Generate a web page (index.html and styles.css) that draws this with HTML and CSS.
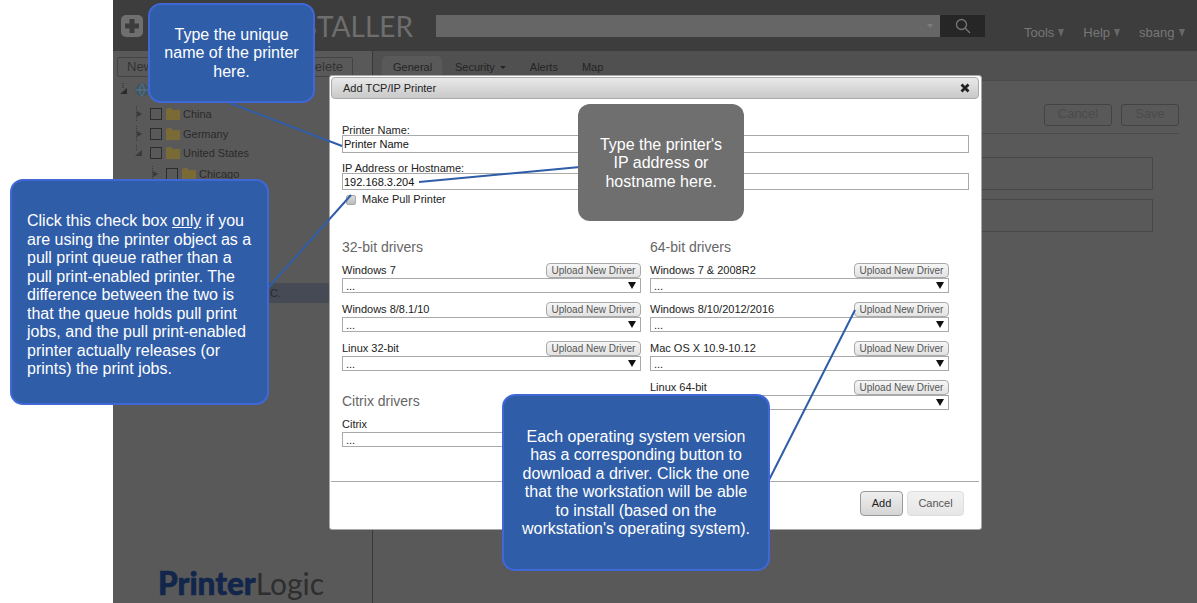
FILE: index.html
```html
<!DOCTYPE html>
<html lang="en">
<head>
<meta charset="utf-8">
<title>Add TCP/IP Printer</title>
<link rel="stylesheet" href="styles.css">
</head>
<body>
<div class="page">
  <div class="app">
    <header class="topbar">
      <div class="brand">
        <svg class="brand-plus" width="22" height="22" viewBox="0 0 22 22"><rect width="22" height="22" rx="5" fill="#6f6f6f"/><path d="M8.5 4h5v4.500h4.500v5h-4.500v4.500h-5v-4.500h-4.500v-5h4.500z" fill="#3d3d3d"/></svg>
        <span class="brand-name">PRINTER INSTALLER</span>
      </div>
      <div class="search">
        <div class="search-field"><span class="search-caret"></span></div>
        <div class="search-btn">
          <svg width="16" height="16" viewBox="0 0 16 16" fill="none" stroke="#777" stroke-width="1.300"><circle cx="6.500" cy="6.500" r="5"/><path d="M10 10l5 5"/></svg>
        </div>
      </div>
      <nav class="topnav">
        <span class="nav-item">Tools<i></i></span>
        <span class="nav-item">Help<i></i></span>
        <span class="nav-item">sbang<i></i></span>
      </nav>
    </header>
    <div class="main">
      <aside class="side">
        <div class="toolbar"><span>New</span><span>Delete</span></div>
        <div class="tree-row root">
          <svg class="exp" width="12" height="14" viewBox="0 0 12 14"><path d="M6 0v5" stroke="#2b2b2b" stroke-dasharray="1 1"/><path d="M10 5v6H3z" fill="#2b2b2b"/></svg>
          <svg class="globe" width="14" height="14" viewBox="0 0 14 14"><circle cx="7" cy="7" r="6.500" fill="#3f5666"/><path d="M1 7h12M7 1c-3 3-3 9 0 12M7 1c3 3 3 9 0 12" stroke="#5d7484" fill="none"/></svg>
        </div>
        <div class="tree-row lvl1 first">
          <svg class="exp" width="12" height="16" viewBox="0 0 12 16"><path d="M2.500 0v16" stroke="#3a3a3a" stroke-dasharray="1 1"/><path d="M3 5l5 3-5 3z" fill="#3a3a3a"/></svg>
          <span class="check"></span>
          <svg class="folder" width="14" height="12" viewBox="0 0 14 12"><path d="M0 2q0-2 2-2h3l1.500 2H14v10H0z" fill="#7a6a36"/></svg>
          <span>China</span>
        </div>
        <div class="tree-row lvl1">
          <svg class="exp" width="12" height="16" viewBox="0 0 12 16"><path d="M2.500 0v16" stroke="#3a3a3a" stroke-dasharray="1 1"/><path d="M3 5l5 3-5 3z" fill="#3a3a3a"/></svg>
          <span class="check"></span>
          <svg class="folder" width="14" height="12" viewBox="0 0 14 12"><path d="M0 2q0-2 2-2h3l1.500 2H14v10H0z" fill="#7a6a36"/></svg>
          <span>Germany</span>
        </div>
        <div class="tree-row lvl1 tight">
          <svg class="exp" width="12" height="16" viewBox="0 0 12 16"><path d="M2.500 0v5" stroke="#3a3a3a" stroke-dasharray="1 1"/><path d="M8 5v6H1z" fill="#3a3a3a"/></svg>
          <span class="check"></span>
          <svg class="folder" width="14" height="12" viewBox="0 0 14 12"><path d="M0 2q0-2 2-2h3l1.500 2H14v10H0z" fill="#7a6a36"/></svg>
          <span>United States</span>
        </div>
        <div class="tree-row lvl2">
          <svg class="exp" width="12" height="16" viewBox="0 0 12 16"><path d="M2.500 0v16" stroke="#3a3a3a" stroke-dasharray="1 1"/><path d="M3 5l5 3-5 3z" fill="#3a3a3a"/></svg>
          <span class="check"></span>
          <svg class="folder" width="14" height="12" viewBox="0 0 14 12"><path d="M0 2q0-2 2-2h3l1.500 2H14v10H0z" fill="#7a6a36"/></svg>
          <span>Chicago</span>
        </div>
        <div class="tree-row selected"><span>C.</span></div>
        <div class="logo"><b>Printer</b><span>Logic</span></div>
      </aside>
      <section class="content">
        <div class="tabs">
          <span class="tab active">General</span>
          <span class="tab">Security <i class="tab-caret"></i></span>
          <span class="tab">Alerts</span>
          <span class="tab">Map</span>
        </div>
        <div class="actions">
          <span class="ghost-btn cancel">Cancel</span>
          <span class="ghost-btn save">Save</span>
        </div>
        <div class="boxes">
          <div class="box"></div>
          <div class="box"></div>
        </div>
      </section>
    </div>
  </div>

  <div class="modal">
    <div class="modal-title">
      <span>Add TCP/IP Printer</span>
      <svg width="10" height="10" viewBox="0 0 10 10"><path d="M1.500 1.500l7 7M8.500 1.500l-7 7" stroke="#222" stroke-width="2.800"/></svg>
    </div>
    <div class="modal-body">
      <label class="field-label">Printer Name:</label>
      <div class="text-input name">Printer Name</div>
      <label class="field-label second">IP Address or Hostname:</label>
      <div class="text-input ip">192.168.3.204</div>
      <div class="pull"><span class="pull-box"></span><span>Make Pull Printer</span></div>
      <div class="columns">
        <div class="col">
          <h3 class="col-head">32-bit drivers</h3>
          <div class="driver"><div class="driver-top"><span>Windows 7</span><span class="upload">Upload New Driver</span></div><div class="select">...<i></i></div></div>
          <div class="driver"><div class="driver-top"><span>Windows 8/8.1/10</span><span class="upload">Upload New Driver</span></div><div class="select">...<i></i></div></div>
          <div class="driver"><div class="driver-top"><span>Linux 32-bit</span><span class="upload">Upload New Driver</span></div><div class="select">...<i></i></div></div>
          <h3 class="col-head citrix">Citrix drivers</h3>
          <div class="driver"><div class="driver-top"><span>Citrix</span></div><div class="select">...<i></i></div></div>
        </div>
        <div class="col">
          <h3 class="col-head">64-bit drivers</h3>
          <div class="driver"><div class="driver-top"><span>Windows 7 &amp; 2008R2</span><span class="upload">Upload New Driver</span></div><div class="select">...<i></i></div></div>
          <div class="driver"><div class="driver-top"><span>Windows 8/10/2012/2016</span><span class="upload">Upload New Driver</span></div><div class="select">...<i></i></div></div>
          <div class="driver"><div class="driver-top"><span>Mac OS X 10.9-10.12</span><span class="upload">Upload New Driver</span></div><div class="select">...<i></i></div></div>
          <div class="driver"><div class="driver-top"><span>Linux 64-bit</span><span class="upload">Upload New Driver</span></div><div class="select">...<i></i></div></div>
        </div>
      </div>
    </div>
    <div class="modal-foot">
      <span class="btn primary">Add</span>
      <span class="btn muted">Cancel</span>
    </div>
  </div>

  <svg class="leaders" width="1197" height="603" viewBox="0 0 1197 603" fill="none" stroke="#2f5da8" stroke-width="2">
    <path d="M230 103L342 146"/>
    <path d="M580 167L419 182"/>
    <path d="M268 288L351 195"/>
    <path d="M769 480L855 310"/>
  </svg>

  <div class="callout c-name">Type the unique<br>name of the printer<br>here.</div>
  <div class="callout c-pull">
    <p>Click this check box <u>only</u> if you<br>are using the printer object as a<br>pull print queue rather than a<br>pull print-enabled printer. The<br>difference between the two is<br>that the queue holds pull print<br>jobs, and the pull print-enabled<br>printer actually releases (or<br>prints) the print jobs.</p>
  </div>
  <div class="callout c-ip">Type the printer's<br>IP address or<br>hostname here.</div>
  <div class="callout c-os">Each operating system version<br>has a corresponding button to<br>download a driver. Click the one<br>that the workstation will be able<br>to install (based on the<br>workstation's operating system).</div>
</div>
</body>
</html>
```
FILE: styles.css
```css
* { box-sizing: border-box; }
html, body { margin: 0; padding: 0; background: #fff; }
body { font-family: "Liberation Sans", Arial, sans-serif; }

.page {
  position: relative;
  width: 1197px;
  height: 603px;
  padding-left: 113px;
  overflow: hidden;
}
.app {
  display: flex;
  flex-direction: column;
  height: 100%;
  background: #595959;
}

/* header */
.topbar {
  display: flex;
  height: 51px;
  padding: 15px 0 0 8px;
  background: #3d3d3d;
  flex: none;
}
.brand { display: flex; width: 292px; height: 22px; align-items: center; justify-content: space-between; }
.brand-name {
  font-family: Lato, "Liberation Sans", sans-serif;
  font-weight: 400;
  font-size: 28px;
  line-height: 22px;
  color: #6e6e6e;
}
.search { display: flex; margin-left: 23px; height: 22px; }
.search-field {
  display: flex;
  align-items: center;
  justify-content: flex-end;
  width: 504px;
  padding-right: 7px;
  background: #666;
}
.search-caret {
  width: 0; height: 0;
  border: 3px solid transparent;
  border-top: 4px solid #7c7c7c;
  border-bottom: 0;
}
.search-btn { display: flex; width: 45px; align-items: center; justify-content: center; background: #262626; }
.topnav {
  display: flex;
  gap: 19px;
  margin-left: 39px;
  padding-top: 10px;
  font-size: 13px;
  line-height: 15px;
  color: #777;
}
.nav-item { display: flex; align-items: center; height: 15px; }
.nav-item i {
  margin-left: 4px;
  border: 3.500px solid transparent;
  border-top: 8px solid #686868;
  border-bottom: 0;
}

/* main */
.main { display: flex; flex: 1; min-height: 0; }
.side {
  display: flex;
  flex-direction: column;
  width: 260px;
  padding-top: 6px;
  border-right: 1px solid #383838;
  flex: none;
  overflow: hidden;
}
.toolbar {
  display: flex;
  justify-content: space-between;
  width: 236px;
  height: 20px;
  margin-left: 4px;
  padding: 0 9px;
  flex: none;
  border: 1px solid #434343;
  border-radius: 2px;
  font-size: 13px;
  line-height: 18px;
  color: #333;
}
.tree-row {
  display: flex;
  align-items: center;
  height: 20px;
  flex: none;
  font-size: 11px;
  color: #2a2a2a;
}
.root { margin-top: 3px; padding-left: 4px; }
.lvl1 { padding-left: 21px; }
.lvl2 { padding-left: 37px; }
.first { margin-top: 4px; }
.tight { margin-top: -1px; }
.lvl2 { margin-top: 1px; }
.exp { flex: none; margin-right: 4px; }
.globe { flex: none; margin-left: 2px; }
.check { width: 12px; height: 12px; border: 1px solid #2c2c2c; margin-right: 4px; flex: none; }
.folder { margin-right: 3px; flex: none; }
.selected { margin-top: 99px; padding-left: 157px; background: #454a55; }
.logo {
  display: flex;
  align-items: baseline;
  margin-top: auto;
  padding-left: 45px;
  height: 36px;
  margin-bottom: 2px;
  font-family: Lato, "Liberation Sans", sans-serif;
  font-size: 30px;
  line-height: 36px;
  color: #2e2e2e;
}
.logo b {
  font-size: 31.500px;
  font-weight: 900;
  color: #12264c;
  -webkit-text-stroke: 0.600px #12264c;
}

/* right */
.content { flex: 1; min-width: 0; display: flex; flex-direction: column; }
.tabs {
  display: flex;
  height: 30px;
  padding: 5px 0 0 9px;
  background: #505050;
  border-bottom: 1px solid #4a4a4a;
  font-size: 11px;
  color: #242424;
  flex: none;
}
.tab { height: 20px; padding: 5px 11px 0; line-height: 13px; margin-right: 2px; }
.tab.active { width: 60px; background: #595959; border-radius: 5px 5px 0 0; }
.tab-caret {
  display: inline-block;
  vertical-align: 2px;
  margin-left: 2px;
  border: 3px solid transparent;
  border-top: 3px solid #242424;
  border-bottom: 0;
}
.actions {
  display: flex;
  justify-content: flex-end;
  gap: 9px;
  height: 53px;
  margin-right: 18px;
  padding-top: 23px;
  border-bottom: 1px solid #4a4a4a;
  flex: none;
}
.ghost-btn {
  height: 22px;
  border: 1px solid #434343;
  border-radius: 3px;
  font-size: 13px;
  line-height: 18px;
  text-align: center;
  color: #4b4b4b;
}
.cancel { width: 68px; }
.save { width: 58px; }
.boxes { display: flex; flex-direction: column; gap: 9px; margin: 23px 44px 0 0; }
.box { height: 33px; border: 1px solid #484848; }

/* modal */
.modal {
  position: absolute;
  left: 329px;
  top: 75px;
  width: 653px;
  height: 455px;
  display: flex;
  flex-direction: column;
  padding: 1px 2px 0 1px;
  background: #fff;
  border: 1px solid #a8a8a8;
  border-radius: 3px;
  color: #222;
}
.modal-title {
  display: flex;
  align-items: center;
  justify-content: space-between;
  height: 22px;
  padding: 0 8px 0 11px;
  flex: none;
  background: linear-gradient(#e9e9e9, #c9c9c9);
  border: 1px solid #aaa;
  border-radius: 4px;
  font-size: 11px;
}
.modal-body { padding: 26px 10px 0 11px; flex: 1; font-size: 11px; }
.field-label { display: block; height: 10px; line-height: 10px; }
.second { margin-top: 10px; }
.text-input {
  padding-left: 1px;
  border: 1px solid #aaa;
  font-size: 11px;
  line-height: 16px;
  color: #111;
}
.name { height: 18px; }
.ip { height: 17px; line-height: 17px; }
.pull { display: flex; align-items: center; height: 13px; margin-top: 2px; padding-left: 4px; font-size: 11px; }
.pull-box {
  width: 10px;
  height: 10px;
  margin: 2px 6px 0 0;
  border: 1px solid #aaa;
  border-radius: 2px;
  background: linear-gradient(#ddd, #bbb);
}
.columns { display: flex; gap: 9px; margin-top: 34px; }
.col { width: 299px; }
.col-head {
  margin: 0 0 8px;
  height: 16px;
  font-size: 14px;
  font-weight: 400;
  line-height: 16px;
  color: #666;
}
.citrix { margin-top: 22px; }
.driver { margin-bottom: 9px; }
.driver-top { display: flex; align-items: flex-start; justify-content: space-between; height: 15px; line-height: 14px; }
.upload {
  width: 95px;
  height: 15px;
  border: 1px solid #aaa;
  border-radius: 4px;
  background: linear-gradient(#f6f6f6, #e2e2e2);
  font-size: 10px;
  line-height: 13px;
  text-align: center;
  color: #555;
}
.select {
  position: relative;
  height: 15px;
  padding-left: 3px;
  border: 1px solid #aaa;
  font-size: 11px;
  line-height: 15px;
  color: #222;
}
.select i {
  position: absolute;
  right: 4px;
  top: 3px;
  border: 4px solid transparent;
  border-top: 7px solid #111;
  border-bottom: 0;
}
.modal-foot {
  display: flex;
  justify-content: flex-end;
  gap: 4px;
  height: 48px;
  padding: 9px 15px 0 0;
  border-top: 1px solid #aaa;
  flex: none;
}
.btn {
  height: 25px;
  border: 1px solid #ddd;
  border-radius: 4px;
  font-size: 11px;
  line-height: 23px;
  text-align: center;
}
.primary { width: 43px; border-color: #999; background: linear-gradient(#efefef, #d5d5d5); color: #222; }
.muted { width: 57px; background: linear-gradient(#f2f2f2, #e6e6e6); color: #555; }

/* annotations */
.leaders { position: absolute; left: 0; top: 0; pointer-events: none; }
.callout {
  position: absolute;
  display: flex;
  align-items: center;
  justify-content: center;
  border: 2px solid #3f68d6;
  border-radius: 13px;
  background: #2f5da8;
  color: #fff;
  font-size: 16px;
  line-height: 18.500px;
  text-align: center;
}
.callout p { margin: 0; text-align: left; }
.c-name { left: 148px; top: 3px; width: 167px; height: 100px; padding-top: 1px; }
.c-pull { left: 10px; top: 179px; width: 259px; height: 226px; justify-content: flex-start; padding: 7px 0 0 15px; }
.c-ip { left: 578px; top: 104px; width: 166px; height: 117px; padding-top: 2px; background: #6f6f6f; border: 0; border-radius: 12px; }
.c-os { left: 502px; top: 394px; width: 268px; height: 177px; padding-top: 1px; }
```
